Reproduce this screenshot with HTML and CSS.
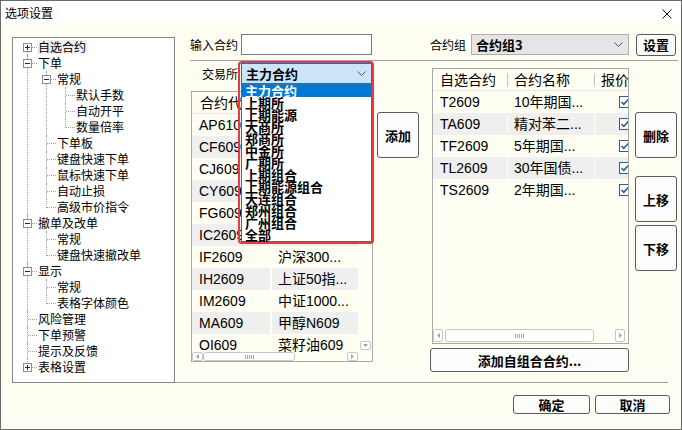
FILE: index.html
```html
<!DOCTYPE html>
<html lang="zh-CN">
<head>
<meta charset="utf-8">
<title>选项设置</title>
<link rel="stylesheet" href="styles.css">
</head>
<body>
<div class="window">
  <div class="titlebar">
    <span class="title">选项设置</span>
    <svg class="close" width="10" height="10" viewBox="0 0 10 10"><path d="M0.5 0.5L9.5 9.5M9.5 0.5L0.5 9.5" stroke="#111" stroke-width="1" fill="none"/></svg>
  </div>
  <div class="client">
    <div class="upper">
      <div class="tree">
        <ul class="tv">
          <li><div class="row"><span class="tw"><svg width="9" height="9" viewBox="0 0 9 9"><rect x=".5" y=".5" width="8" height="8" fill="#fff" stroke="#8f8f8f"/><path d="M2 4.5h5M4.5 2v5" stroke="#1b2a55"/></svg></span><span class="tx sel">自选合约</span></div></li>
          <li><div class="row"><span class="tw"><svg width="9" height="9" viewBox="0 0 9 9"><rect x=".5" y=".5" width="8" height="8" fill="#fff" stroke="#8f8f8f"/><path d="M2 4.5h5" stroke="#1b2a55"/></svg></span><span class="tx">下单</span></div>
            <ul>
              <li><div class="row"><span class="tw"><svg width="9" height="9" viewBox="0 0 9 9"><rect x=".5" y=".5" width="8" height="8" fill="#fff" stroke="#8f8f8f"/><path d="M2 4.5h5" stroke="#1b2a55"/></svg></span><span class="tx">常规</span></div>
                <ul>
                  <li><div class="row"><span class="tw lf"></span><span class="tx">默认手数</span></div></li>
                  <li><div class="row"><span class="tw lf"></span><span class="tx">自动开平</span></div></li>
                  <li><div class="row"><span class="tw lf"></span><span class="tx">数量倍率</span></div></li>
                </ul>
              </li>
              <li><div class="row"><span class="tw lf"></span><span class="tx">下单板</span></div></li>
              <li><div class="row"><span class="tw lf"></span><span class="tx">键盘快速下单</span></div></li>
              <li><div class="row"><span class="tw lf"></span><span class="tx">鼠标快速下单</span></div></li>
              <li><div class="row"><span class="tw lf"></span><span class="tx">自动止损</span></div></li>
              <li><div class="row"><span class="tw lf"></span><span class="tx">高级市价指令</span></div></li>
            </ul>
          </li>
          <li><div class="row"><span class="tw"><svg width="9" height="9" viewBox="0 0 9 9"><rect x=".5" y=".5" width="8" height="8" fill="#fff" stroke="#8f8f8f"/><path d="M2 4.5h5" stroke="#1b2a55"/></svg></span><span class="tx">撤单及改单</span></div>
            <ul>
              <li><div class="row"><span class="tw lf"></span><span class="tx">常规</span></div></li>
              <li><div class="row"><span class="tw lf"></span><span class="tx">键盘快速撤改单</span></div></li>
            </ul>
          </li>
          <li><div class="row"><span class="tw"><svg width="9" height="9" viewBox="0 0 9 9"><rect x=".5" y=".5" width="8" height="8" fill="#fff" stroke="#8f8f8f"/><path d="M2 4.5h5" stroke="#1b2a55"/></svg></span><span class="tx">显示</span></div>
            <ul>
              <li><div class="row"><span class="tw lf"></span><span class="tx">常规</span></div></li>
              <li><div class="row"><span class="tw lf"></span><span class="tx">表格字体颜色</span></div></li>
            </ul>
          </li>
          <li><div class="row"><span class="tw lf"></span><span class="tx">风险管理</span></div></li>
          <li><div class="row"><span class="tw lf"></span><span class="tx">下单预警</span></div></li>
          <li><div class="row"><span class="tw lf"></span><span class="tx">提示及反馈</span></div></li>
          <li><div class="row"><span class="tw"><svg width="9" height="9" viewBox="0 0 9 9"><rect x=".5" y=".5" width="8" height="8" fill="#fff" stroke="#8f8f8f"/><path d="M2 4.5h5M4.5 2v5" stroke="#1b2a55"/></svg></span><span class="tx">表格设置</span></div></li>
        </ul>
      </div>

      <div class="right">
        <div class="r-top">
          <div class="field"><span class="lbl">输入合约</span><span class="input"></span></div>
          <span class="lbl grp-lbl">合约组</span>
          <div class="combo gray"><span>合约组3</span><svg width="9" height="5" viewBox="0 0 9 5"><path d="M0.5 0.5L4.5 4.5L8.5 0.5" fill="none" stroke="#555"/></svg></div>
          <button class="btn set">设置</button>
        </div>
        <div class="sep"></div>
        <div class="r-mid">
          <div class="lcol">
            <div class="exch"><span class="lbl">交易所</span><div class="combo blue"><span>主力合约</span><svg width="9" height="5" viewBox="0 0 9 5"><path d="M0.5 0.5L4.5 4.5L8.5 0.5" fill="none" stroke="#555"/></svg></div></div>
            <div class="table ltable">
              <div class="thead"><span class="c1">合约代码</span><span class="hsep"></span><span class="c2"></span></div>
              <div class="tbody">
                <div class="rows">
                  <div class="trow"><span class="c1">AP610</span><span class="c2"></span></div>
                  <div class="trow alt"><span class="c1">CF609</span><span class="c2"></span></div>
                  <div class="trow"><span class="c1">CJ609</span><span class="c2"></span></div>
                  <div class="trow alt"><span class="c1">CY609</span><span class="c2"></span></div>
                  <div class="trow"><span class="c1">FG609</span><span class="c2"></span></div>
                  <div class="trow alt"><span class="c1">IC2609</span><span class="c2"></span></div>
                  <div class="trow"><span class="c1">IF2609</span><span class="c2">沪深300...</span></div>
                  <div class="trow alt"><span class="c1">IH2609</span><span class="c2">上证50指...</span></div>
                  <div class="trow"><span class="c1">IM2609</span><span class="c2">中证1000...</span></div>
                  <div class="trow alt"><span class="c1">MA609</span><span class="c2">甲醇N609</span></div>
                  <div class="trow"><span class="c1">OI609</span><span class="c2">菜籽油609</span></div>
                </div>
                <div class="vs"><span class="sa sa-s"><svg width="5" height="3" viewBox="0 0 5 3"><path d="M0 0h5L2.5 3z" fill="#a3a3a3"/></svg></span></div>
              </div>
              <div class="tfoot">
                <div class="hs hs-s">
                  <span class="sa"><svg width="3" height="5" viewBox="0 0 3 5"><path d="M3 0v5L0 2.5z" fill="#a3a3a3"/></svg></span>
                  <span class="thumb t-l"><span class="grip"></span></span>
                  <span class="track"></span>
                  <span class="sa"><svg width="3" height="5" viewBox="0 0 3 5"><path d="M0 0v5L3 2.5z" fill="#a3a3a3"/></svg></span>
                </div>
                <div class="corner"></div>
              </div>
            </div>
            <div class="dropdown">
              <div class="hl">主力合约</div>
              <div>上期所</div>
              <div>上期能源</div>
              <div>大商所</div>
              <div>郑商所</div>
              <div>中金所</div>
              <div>广期所</div>
              <div>上期组合</div>
              <div>上期能源组合</div>
              <div>大连组合</div>
              <div>郑州组合</div>
              <div>广州组合</div>
              <div>全部</div>
            </div>
            <div class="annot"></div>
          </div>

          <div class="acol"><button class="btn tall">添加</button></div>

          <div class="rcol">
            <div class="table rtable">
              <div class="thead"><span class="c1">自选合约</span><span class="hsep"></span><span class="c2">合约名称</span><span class="hsep"></span><span class="c3">报价</span></div>
              <div class="rows">
                <div class="trow"><span class="c1">T2609</span><span class="c2">10年期国...</span><span class="c3"><svg width="12" height="12" viewBox="0 0 12 12"><rect x=".5" y=".5" width="11" height="11" fill="#fff" stroke="#2c5d9c"/><path d="M2.5 6l2.3 2.3L9.5 3.2" fill="none" stroke="#2c5d9c" stroke-width="1.6"/></svg></span></div>
                <div class="trow alt"><span class="c1">TA609</span><span class="c2">精对苯二...</span><span class="c3"><svg width="12" height="12" viewBox="0 0 12 12"><rect x=".5" y=".5" width="11" height="11" fill="#fff" stroke="#2c5d9c"/><path d="M2.5 6l2.3 2.3L9.5 3.2" fill="none" stroke="#2c5d9c" stroke-width="1.6"/></svg></span></div>
                <div class="trow"><span class="c1">TF2609</span><span class="c2">5年期国...</span><span class="c3"><svg width="12" height="12" viewBox="0 0 12 12"><rect x=".5" y=".5" width="11" height="11" fill="#fff" stroke="#2c5d9c"/><path d="M2.5 6l2.3 2.3L9.5 3.2" fill="none" stroke="#2c5d9c" stroke-width="1.6"/></svg></span></div>
                <div class="trow alt"><span class="c1">TL2609</span><span class="c2">30年国债...</span><span class="c3"><svg width="12" height="12" viewBox="0 0 12 12"><rect x=".5" y=".5" width="11" height="11" fill="#fff" stroke="#2c5d9c"/><path d="M2.5 6l2.3 2.3L9.5 3.2" fill="none" stroke="#2c5d9c" stroke-width="1.6"/></svg></span></div>
                <div class="trow"><span class="c1">TS2609</span><span class="c2">2年期国...</span><span class="c3"><svg width="12" height="12" viewBox="0 0 12 12"><rect x=".5" y=".5" width="11" height="11" fill="#fff" stroke="#2c5d9c"/><path d="M2.5 6l2.3 2.3L9.5 3.2" fill="none" stroke="#2c5d9c" stroke-width="1.6"/></svg></span></div>
              </div>
              <div class="hs hs-r">
                <span class="sa"><svg width="3" height="5" viewBox="0 0 3 5"><path d="M3 0v5L0 2.5z" fill="#a3a3a3"/></svg></span>
                <span class="thumb t-r"><span class="grip"></span></span>
                <span class="track"></span>
                <span class="sa"><svg width="3" height="5" viewBox="0 0 3 5"><path d="M0 0v5L3 2.5z" fill="#a3a3a3"/></svg></span>
              </div>
            </div>
            <button class="btn wide">添加自组合合约...</button>
          </div>

          <div class="bcol">
            <button class="btn tall b-del">删除</button>
            <button class="btn tall b-up">上移</button>
            <button class="btn tall b-down">下移</button>
          </div>
        </div>
      </div>
    </div>

    <div class="footer">
      <div class="sep2"></div>
      <div class="fbtns">
        <button class="btn b-ok">确定</button>
        <button class="btn b-cancel">取消</button>
      </div>
    </div>
  </div>
</div>
</body>
</html>
```

FILE: styles.css
```css
* { box-sizing: border-box; }
html, body { margin: 0; padding: 0; background: #fff; }
body {
  font-family: "Noto Sans CJK SC", "Liberation Sans", sans-serif;
  font-size: 12px;
  color: #000;
}

.window {
  width: 682px;
  height: 430px;
  border: 1px solid #6b6b6b;
  background: #fffef2;
  display: flex;
  flex-direction: column;
  overflow: hidden;
}

.titlebar {
  flex: none;
  height: 22px;
  background: #fff;
  display: flex;
  justify-content: space-between;
  align-items: flex-start;
  padding: 0 9px 0 4px;
}
.title { margin-top: 5px; line-height: 14px; font-size: 12px; }
.close { display: block; margin-top: 8px; }

.client { flex: 1; }
.upper {
  display: flex;
  align-items: flex-start;
  padding-left: 11px;
  height: 360px;
}

/* tree */
.tree {
  margin-top: 14px;
  width: 163px;
  height: 346px;
  flex: none;
  border: 1px solid #828790;
  background: #fff;
  padding: 1px 0 0 10px;
  overflow: hidden;
}
.tv, .tv ul { list-style: none; margin: 0; padding: 0; }
.tv ul { margin-left: 19px; }
.tv li { position: relative; }
.tv li::before {
  content: "";
  position: absolute;
  left: 4px;
  top: 0;
  bottom: 0;
  border-left: 1px dotted #a0a0a0;
}
.tv li:last-child::before { bottom: auto; height: 9px; }
.tv > li:first-child::before { top: 8px; }
.row {
  height: 16px;
  display: flex;
  align-items: flex-start;
  white-space: nowrap;
}
.tw {
  flex: none;
  width: 14px;
  height: 16px;
  display: flex;
  align-items: flex-start;
}
.tw svg { display: block; margin-top: 4px; position: relative; z-index: 1; flex: none; }
.tw::after {
  content: "";
  flex: 1;
  margin-top: 8px;
  border-top: 1px dotted #a0a0a0;
}
.tw.lf { padding-left: 5px; }
.tx { margin-top: 1px; line-height: 14px; font-size: 12px; padding: 0 1px; }
.tx.sel { background: #efefef; }

/* right side */
.right { margin-left: 15px; margin-top: 11px; width: 490px; }
.r-top { display: flex; align-items: center; height: 21px; }
.field { width: 182px; display: flex; align-items: center; flex: none; }
.lbl { font-size: 12px; line-height: 14px; white-space: nowrap; }
.input {
  margin-left: auto;
  width: 131px;
  height: 21px;
  border: 1px solid #7a7a7a;
  background: #fff;
}
.grp-lbl { margin-left: 58px; }

.combo {
  display: flex;
  align-items: center;
  justify-content: space-between;
  height: 21px;
  padding: 0 5px 0 4px;
  font-weight: bold;
  font-size: 13px;
  line-height: 15px;
  flex: none;
}
.combo svg { display: block; }
.combo.gray { margin-left: 5px; width: 158px; background: #e5e5e5; border: 1px solid #adadad; }
.combo.blue { margin-left: 3px; width: 131px; background: #cce4f7; border: 1px solid #0078d7; }

.btn {
  font-family: "Noto Sans CJK SC", "Liberation Sans", sans-serif;
  font-weight: bold;
  font-size: 13px;
  line-height: 15px;
  color: #000;
  background: #fdfdfd;
  border: 1px solid #5a5a5a;
  border-radius: 3px;
  padding: 0;
  margin: 0;
  display: flex;
  align-items: center;
  justify-content: center;
  flex: none;
}
.btn.set { margin-left: 7px; width: 40px; height: 22px; }

.sep { margin-top: 5px; height: 1px; width: 488px; background: #a0a0a0; }

.r-mid { display: flex; align-items: flex-start; }
.lcol { width: 183px; position: relative; flex: none; }
.exch { margin-top: 2px; height: 21px; display: flex; align-items: center; }
.exch .lbl { margin-left: 12px; }

/* tables */
.table {
  border: 1px solid #a9a9a9;
  background: #fffef2;
  overflow: hidden;
  font-family: "Liberation Sans", "Noto Sans CJK SC", sans-serif;
  font-size: 14px;
}
.thead {
  display: flex;
  align-items: center;
  height: 22px;
  border-bottom: 1px solid #e6e6e6;
  white-space: nowrap;
  overflow: hidden;
}
.thead span { flex: none; overflow: hidden; line-height: 20px; }
.thead .hsep { width: 1px; height: 14px; background: #c4c4c4; }
.trow { display: grid; height: 22px; line-height: 22px; white-space: nowrap; }
.trow span { overflow: hidden; }
.trow.alt span { background: #efefef; }

.ltable { margin-top: 7px; margin-left: 1px; width: 182px; height: 271px; }
.ltable .thead .c1 { width: 79px; padding-left: 8px; }
.ltable .thead .hsep { margin-right: 1px; }
.ltable .thead .c2 { width: 85px; padding-left: 6px; }
.tbody { display: flex; }
.ltable .rows { width: 166px; height: 238px; overflow: hidden; flex: none; }
.ltable .trow { grid-template-columns: 78px 86px; column-gap: 2px; }
.ltable .trow .c1 { padding-left: 7px; }
.ltable .trow .c2 { padding-left: 6px; }
.vs {
  width: 14px;
  height: 238px;
  display: flex;
  flex-direction: column;
  justify-content: flex-end;
  align-items: center;
  padding-bottom: 2px;
}
.sa {
  flex: none;
  display: flex;
  align-items: center;
  justify-content: center;
  border: 1px solid #c6c6c6;
  border-radius: 2px;
  background: #fff;
}
.sa svg { display: block; }
.sa-s { width: 11px; height: 9px; }
.tfoot { display: flex; height: 9px; }
.hs { display: flex; align-items: center; }
.hs-s { width: 166px; height: 9px; }
.hs-s .sa { width: 11px; height: 9px; }
.thumb {
  flex: none;
  display: flex;
  align-items: center;
  justify-content: center;
  border: 1px solid #c6c6c6;
  border-radius: 3px;
  background: #fff;
}
.t-l { width: 92px; height: 9px; }
.track { flex: 1; }
.grip {
  width: 9px;
  height: 4px;
  background: repeating-linear-gradient(90deg, #a8a8a8 0 1px, transparent 1px 2px);
}
.corner { width: 14px; }

/* dropdown overlay */
.dropdown {
  position: absolute;
  left: 51px;
  top: 23px;
  width: 131px;
  border: 1px solid #646464;
  background: #fff;
  font-weight: bold;
  font-size: 13px;
  line-height: 12px;
}
.dropdown div { height: 12px; padding-left: 3px; white-space: nowrap; }
.dropdown .hl { background: #0078d7; color: #fff; }
.annot {
  position: absolute;
  left: 48px;
  top: 0;
  width: 136px;
  height: 183px;
  border: 2px solid #e63b41;
  border-radius: 4px;
  box-shadow: 0 0 1px #f29a9a;
}

.acol { margin-left: 4px; width: 42px; flex: none; }
.btn.tall { width: 42px; height: 46px; }
.acol .btn { margin-top: 51px; }

.rcol { margin-left: 13px; width: 197px; flex: none; }
.rtable { margin-top: 7px; height: 276px; }
.rtable .thead .c1 { width: 74px; padding-left: 7px; }
.rtable .thead .c2 { width: 86px; padding-left: 6px; }
.rtable .thead .c3 { width: 33px; padding-left: 6px; }
.rtable .rows { height: 237px; overflow: hidden; }
.rtable .trow { grid-template-columns: 74px 86px 33px; column-gap: 1px; }
.rtable .trow .c1 { padding-left: 7px; }
.rtable .trow .c2 { padding-left: 6px; }
.rtable .trow .c3 { padding-left: 24px; display: flex; align-items: center; }
.rtable .trow .c3 svg { display: block; flex: none; }
.hs-r { height: 15px; padding-right: 3px; }
.hs-r .sa { width: 10px; height: 13px; }
.t-r { width: 149px; height: 13px; margin-left: 2px; }
.btn.wide { margin-top: 4px; margin-left: -2px; width: 199px; height: 24px; }

.bcol { margin-left: 6px; width: 42px; flex: none; }
.b-del { margin-top: 51px; }
.b-up { margin-top: 18px; }
.b-down { margin-top: 3px; }

/* footer */
.sep2 { margin-top: -1px; margin-left: 174px; width: 493px; height: 1px; background: #a0a0a0; }
.fbtns { display: flex; justify-content: flex-end; gap: 5px; padding-right: 11px; margin-top: 12px; }
.fbtns .btn { height: 19px; }
.b-ok { width: 77px; }
.b-cancel { width: 75px; }
```
